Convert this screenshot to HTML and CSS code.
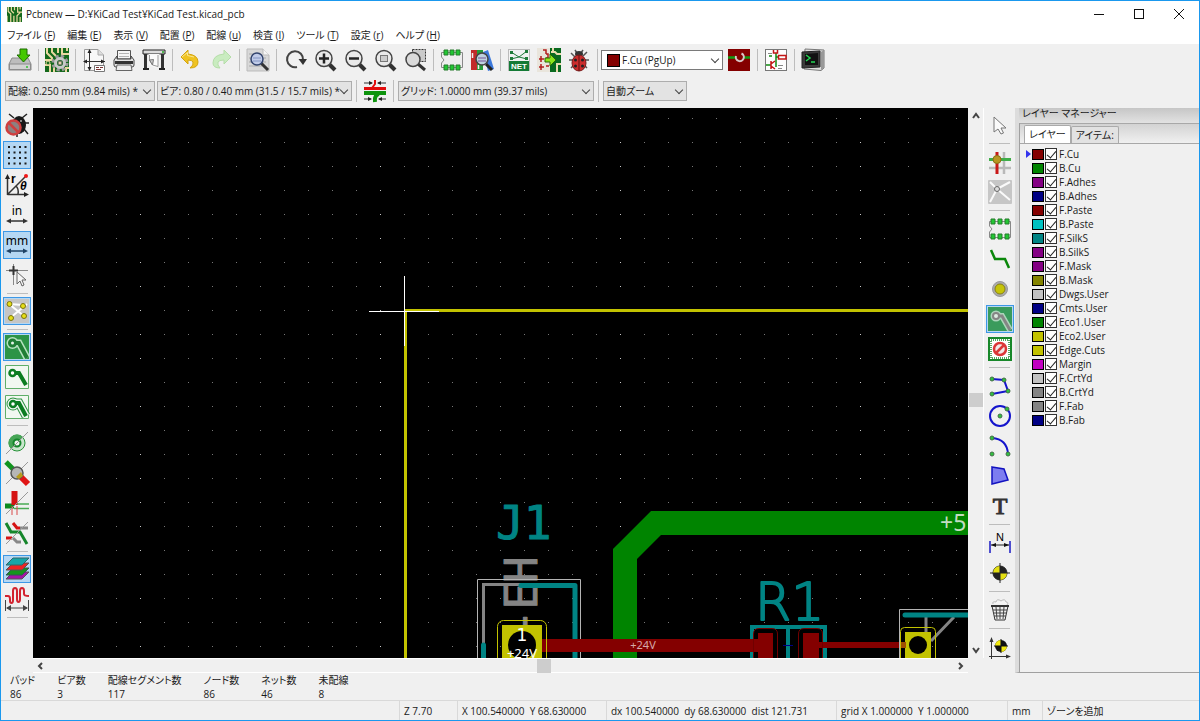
FILE: index.html
```html
<!DOCTYPE html>
<html lang="ja">
<head>
    <meta charset="UTF-8"/>
    <title>Pcbnew</title>
    <link rel="stylesheet" href="styles.css">
</head>
<body>

<header class="titlebar">
    <svg class="app-icon" viewBox="0 0 24 24">
        <rect width="24" height="24" fill="#14691c"/>
        <path d="M2 0V7L6 11V24M7 0V6L11 10M12 0V5M17 0V8H24M21 0V4M0 14V24M11 14V24M16 24V14L21 9M21 24V16" fill="none" stroke="#ead9a0" stroke-width="2"/>
    </svg>
    <h1 class="title">Pcbnew — D:¥KiCad Test¥KiCad Test.kicad_pcb</h1>
    <div class="window-controls">
        <button aria-label="最小化"><svg viewBox="0 0 12 12"><path d="M1 6.5H11"/></svg></button>
        <button aria-label="最大化"><svg viewBox="0 0 12 12"><rect x="1.5" y="1.5" width="9" height="9"/></svg></button>
        <button aria-label="閉じる"><svg viewBox="0 0 12 12"><path d="M1 1L11 11M11 1L1 11"/></svg></button>
    </div>
</header>

<nav class="menubar">
    <a href="#">ファイル (<u>F</u>)</a>
    <a href="#">編集 (<u>E</u>)</a>
    <a href="#">表示 (<u>V</u>)</a>
    <a href="#">配置 (<u>P</u>)</a>
    <a href="#">配線 (<u>u</u>)</a>
    <a href="#">検査 (<u>I</u>)</a>
    <a href="#">ツール (<u>T</u>)</a>
    <a href="#">設定 (<u>r</u>)</a>
    <a href="#">ヘルプ (<u>H</u>)</a>
</nav>

<div class="toolbar">
    <button class="tool" aria-label="保存">
        <svg viewBox="0 0 24 24"><path d="M4 10H20L23 16V22H1V16Z" fill="#bdbdbd" stroke="#8b8b8b"/><path d="M1.500 16H22.500V21.500H1.500Z" fill="#d2d2d2" stroke="#8b8b8b"/><circle cx="19" cy="19" r="1" fill="#30c030"/><path d="M12 1H19V7H22L15.500 14L9 7H12Z" fill="#45c800" stroke="#1d6b00"/></svg>
    </button>
    <span class="sep"></span>
    <button class="tool" aria-label="基板の設定">
        <svg viewBox="0 0 24 24"><rect width="24" height="24" fill="#14691c"/><path d="M2 0V5L7 10V12H0M7 0V4L11 8M13 0V5M17 0V6H24M22 0V3M0 17H5V24M9 24V19M21 24V20H24" fill="none" stroke="#ead9a0" stroke-width="2"/><circle cx="3" cy="15" r="2" fill="#14691c" stroke="#ead9a0"/><circle cx="15" cy="15" r="6.500" fill="none" stroke="#999" stroke-width="4" stroke-dasharray="3 2.100"/><circle cx="15" cy="15" r="4.500" fill="#14691c" stroke="#c8c8c8" stroke-width="3"/><circle cx="15" cy="15" r="2" fill="#e4d7a8" stroke="#666"/></svg>
    </button>
    <span class="sep"></span>
    <button class="tool" aria-label="ページ設定">
        <svg viewBox="0 0 24 24"><path d="M2.500 1.500H16L21.500 7V22.500H2.500Z" fill="#f8f8f8" stroke="#999"/><path d="M16 1.500V7H21.500" fill="#ddd" stroke="#aaa"/><path d="M7.500 3V22M3 13.500H23" stroke="#333" fill="none"/><path d="M7.500 1L5.500 5H9.500ZM7.500 23L5.500 19H9.500ZM1 13.500L5 11.500V15.500ZM23 13.500L19 11.500V15.500Z" fill="#222"/><path d="M12.500 17.500H22.500V23.500H12.500Z" fill="#fff" stroke="#777"/><path d="M14 19.500H17M18 19.500H21M14 21.500H19" stroke="#7a3333"/></svg>
    </button>
    <button class="tool" aria-label="印刷">
        <svg viewBox="0 0 24 24"><path d="M5.500 2.500H18.500V11H5.500Z" fill="#f6f6f6" stroke="#555"/><path d="M7 5.500H17M7 8.500H17" stroke="#b5b5b5"/><path d="M5 8L2 12V17Q2 19 4 19H20Q22 19 22 17V12L19 8V11H5Z" fill="#e4e4e4" stroke="#444"/><path d="M3 13H21V16H3Z" fill="#333"/><path d="M5 17H19L20 22.500H4Z" fill="#ededed" stroke="#666"/></svg>
    </button>
    <button class="tool" aria-label="プロット">
        <svg viewBox="0 0 24 24"><path d="M1 2H23V6H1Z" fill="#ddd" stroke="#222"/><path d="M3.500 6V20M20.500 6V20" stroke="#333" stroke-width="3"/><path d="M1 21H7M17 21H23" stroke="#222" stroke-width="2"/><path d="M6.500 6H17.500V17L14 20L6.500 17Z" fill="#f8f8f8"/><path d="M7.500 7V12L10.500 17L16 18.500V7" fill="#fbfbfb" stroke="#999"/><path d="M10.500 17L11.500 11.500L7.500 12Z" fill="#ccc" stroke="#777"/><circle cx="21" cy="4" r="1" fill="#2a2"/></svg>
    </button>
    <span class="sep"></span>
    <button class="tool" aria-label="元に戻す">
        <svg viewBox="0 0 24 24"><path d="M2 9L9 2V6Q19 7 19 14Q19 20 11 20Q15 17 14 14Q13 12 9 12V16Z" fill="#efc321" stroke="#d4a40e"/><path d="M3 9L8.500 4.500V7.500L15 9" fill="none" stroke="#fbe792"/></svg>
    </button>
    <button class="tool" aria-label="やり直し">
        <svg viewBox="0 0 24 24"><path d="M22 9L15 2V6Q4 7 4 15Q4 20 11 20Q8 17 9 14Q10 12 15 12V16Z" fill="#c9ecc0" stroke="#b5dda9"/></svg>
    </button>
    <span class="sep"></span>
    <button class="tool" aria-label="検索">
        <svg viewBox="0 0 24 24"><path d="M1 1H17L23 7V23H1Z" fill="#d8d8d8" stroke="#bbb"/><path d="M17 1V7H23" fill="#f5f5f5" stroke="#bbb"/><path d="M3 6H15M3 10H20M3 14H20M3 18H16" stroke="#aaa"/><path d="M15 15L22 22" stroke="#333" stroke-width="3"/><circle cx="11" cy="11" r="6" fill="#c1cce9" stroke="#33456f" stroke-width="1.500"/><path d="M7 10H15M7 13H15" stroke="#8496c3"/></svg>
    </button>
    <span class="sep"></span>
    <button class="tool" aria-label="再描画">
        <svg viewBox="0 0 24 24"><path d="M14 19A8 8 0 1 1 20 12" fill="none" stroke="#444" stroke-width="2"/><path d="M15.500 11H24L20 17Z" fill="#333"/></svg>
    </button>
    <button class="tool" aria-label="拡大">
        <svg viewBox="0 0 24 24"><path d="M16 16L22 22" stroke="#333" stroke-width="4"/><circle cx="11" cy="10.500" r="8" fill="#e9e9e9" stroke="#444" stroke-width="1.500"/><path d="M6 10.500H16M11 5.500V15.500" stroke="#222" stroke-width="2.500"/></svg>
    </button>
    <button class="tool" aria-label="縮小">
        <svg viewBox="0 0 24 24"><path d="M16 16L22 22" stroke="#333" stroke-width="4"/><circle cx="11" cy="10.500" r="8" fill="#e9e9e9" stroke="#444" stroke-width="1.500"/><path d="M6 10.500H16" stroke="#222" stroke-width="2.500"/></svg>
    </button>
    <button class="tool" aria-label="画面に合わせる">
        <svg viewBox="0 0 24 24"><path d="M16 16L22 22" stroke="#333" stroke-width="4"/><circle cx="11" cy="10.500" r="8" fill="#e9e9e9" stroke="#444" stroke-width="1.500"/><rect x="7.500" y="7.500" width="7" height="6" fill="#ccc" stroke="#777"/></svg>
    </button>
    <button class="tool" aria-label="選択範囲を拡大">
        <svg viewBox="0 0 24 24"><rect x="9.500" y="1.500" width="13" height="12" fill="#cacaca" stroke="#333" stroke-dasharray="2 1"/><path d="M15 16L22 22" stroke="#333" stroke-width="3"/><circle cx="10" cy="11.500" r="7" fill="#dadada" stroke="#444" stroke-width="1.500"/></svg>
    </button>
    <span class="sep"></span>
    <button class="tool" aria-label="フットプリント エディター">
        <svg viewBox="0 0 24 24"><path d="M1.500 4.500H22.500V19.500H1.500V15L4 12L1.500 9Z" fill="#eee" stroke="#888"/><path d="M4 2H8V7H4ZM10 2H14V7H10ZM16 2H20V7H16ZM4 17H8V22H4ZM10 17H14V22H10ZM16 17H20V22H16Z" fill="#21c832" stroke="#267a2c"/></svg>
    </button>
    <button class="tool" aria-label="フットプリント ビューアー">
        <svg viewBox="0 0 24 24"><path d="M1 2H7V22H1Z" fill="#c22b2b"/><path d="M7 2H13V22H7Z" fill="#259b39"/><path d="M13 4L18 2L24 21L18 23Z" fill="#3b78db"/><path d="M2.500 5V10M8.500 17V21" stroke="#eee" stroke-width="1.500"/><path d="M16 16L22 22" stroke="#222" stroke-width="3"/><circle cx="12" cy="11" r="6" fill="#bdd2df" stroke="#444" stroke-width="1.500"/><path d="M8 10H16M8 13H16" stroke="#759"/></svg>
    </button>
    <span class="sep"></span>
    <button class="tool" aria-label="ネットリスト">
        <svg viewBox="0 0 24 24"><rect x="1.500" y="1.500" width="21" height="21" fill="#f2f2f2" stroke="#bbb"/><path d="M4 4L12 9L20 3M12 9L4 11M12 9L20 11" fill="none" stroke="#207b3a"/><path d="M3 3H6V6H3ZM18 2H21V5H18ZM3 9H6V12H3ZM18 9H21V12H18Z" fill="#207b3a"/><rect x="2" y="13" width="20" height="10" fill="#147a35"/><text class="net-label" x="12" y="21">NET</text></svg>
    </button>
    <button class="tool" aria-label="ネットリストの読み込み">
        <svg viewBox="0 0 24 24"><rect width="24" height="24" fill="#e9e5dc"/><path d="M13 0H24V24H13V16L17 13L13 10Z" fill="#0a6a20"/><path d="M14 4H18L20 6H24M16 0V3M20 24V16H24" fill="none" stroke="#ecdcae" stroke-width="2"/><path d="M2 11H7M4 8V14M2 19H7M4 16V22M9 6H11V10H9M9 18H12M6 2H9V6" fill="none" stroke="#b31e1e" stroke-width="1.500"/><path d="M8 10H13V6L19 12L13 18V14H8Z" fill="#8de51c" stroke="#266c00"/></svg>
    </button>
    <button class="tool" aria-label="デザインルールチェック">
        <svg viewBox="0 0 24 24"><path d="M4 5L8 9M20 4L16 8M2 12H6M22 12H18M4 20L7 17M20 20L17 17M8 2L10 5M16 2L14 5" stroke="#555" stroke-width="1.500"/><ellipse cx="12" cy="6" rx="4" ry="3" fill="#333"/><ellipse cx="12" cy="15" rx="7" ry="8" fill="#cc2d2d" stroke="#791d1d"/><path d="M12 7V23" stroke="#5c1111"/><circle cx="8.500" cy="12" r="1.500" fill="#222"/><circle cx="15.500" cy="12" r="1.500" fill="#222"/><circle cx="8.500" cy="18" r="1.500" fill="#222"/><circle cx="15.500" cy="18" r="1.500" fill="#222"/></svg>
    </button>
    <span class="sep"></span>
    <span class="select layer-select">
        <span class="swatch"></span>
        <select aria-label="レイヤー"><option>F.Cu (PgUp)</option></select>
    </span>
    <button class="tool" aria-label="レイヤーペア">
        <svg viewBox="0 0 24 24"><rect x="1" y="1" width="22" height="22" fill="#840000"/><path d="M1 9.500H8M16 9.500H23" stroke="#129a12" stroke-width="2.500"/><path d="M14.500 5.500A4 4 0 1 1 9 8" fill="none" stroke="#d8c7c7" stroke-width="2"/></svg>
    </button>
    <span class="sep"></span>
    <button class="tool" aria-label="回路図エディター">
        <svg viewBox="0 0 24 24"><rect x="1.500" y="1.500" width="21" height="21" fill="#fdfdfd" stroke="#777"/><path d="M12 5V19M5 8H8M12 9H15M2 17H7" stroke="#118a11" stroke-width="1.500"/><path d="M9.500 2V5H13.500V2M14.500 7.500H22V11H14.500ZM7 13V21M7 16L11 13M7 18L11 21" fill="none" stroke="#c31616" stroke-width="1.500"/><path d="M4 5.500H8M14 17.500H19M14 20.500H18" stroke="#888"/></svg>
    </button>
    <span class="sep"></span>
    <button class="tool" aria-label="スクリプト コンソール">
        <svg viewBox="0 0 24 24"><path d="M4 1L23 2V20L20 22.500L3 21Z" fill="#ddd" stroke="#777"/><path d="M20 4V22L23 20V2Z" fill="#999"/><path d="M1 4L19 3V19L1 20Z" fill="#3b3b3b" stroke="#222"/><path d="M4 6L17 5V17L4 17Z" fill="#111"/><path d="M5 7L9 10L5 13M10 14H14" fill="none" stroke="#24d655" stroke-width="1.500"/></svg>
    </button>
</div>

<div class="toolbar toolbar-options">
    <span class="select track-select"><select aria-label="配線幅"><option>配線: 0.250 mm (9.84 mils) *</option></select></span>
    <span class="select via-select"><select aria-label="ビアサイズ"><option>ビア: 0.80 / 0.40 mm (31.5 / 15.7 mils) *</option></select></span>
    <span class="sep"></span>
    <button class="tool" aria-label="自動配線幅">
        <svg viewBox="0 0 24 24"><path d="M1 9.500H23" stroke="#e10d0d" stroke-width="3"/><path d="M1 14H23" stroke="#0d930d" stroke-width="4"/><path d="M12 1V5L9 9" fill="none" stroke="#e10d0d" stroke-width="2"/><path d="M16 15Q11 16 12 23" fill="none" stroke="#0d930d" stroke-width="4"/><path d="M1 4H9M23 4H15M1 20H8M23 20H16" stroke="#333"/><path d="M10 4L6 2V6ZM14 4L18 2V6ZM9 20L5 18V22ZM15 20L19 18V22Z" fill="#222"/></svg>
    </button>
    <span class="sep"></span>
    <span class="select grid-select"><select aria-label="グリッド"><option>グリッド: 1.0000 mm (39.37 mils)</option></select></span>
    <span class="sep"></span>
    <span class="select zoom-select"><select aria-label="ズーム"><option>自動ズーム</option></select></span>
</div>

<main class="workspace">
    <div class="toolbox toolbox-left">
        <button class="tool" aria-label="DRCオフ">
            <svg viewBox="0 0 24 24"><path d="M9 5L4 1M17 5L22 1M20 10H24M19 16L23 21M12 20V24" stroke="#222" stroke-width="1.500"/><ellipse cx="14" cy="12" rx="7" ry="9" fill="#181818"/><circle cx="16" cy="8" r="1" fill="#aaa"/><circle cx="8.500" cy="14.500" r="7" fill="#8d8080" stroke="#cf3f3f" stroke-width="2.500"/><path d="M4 10L13 19" stroke="#cf3f3f" stroke-width="2.500"/></svg>
        </button>
        <button class="tool active" aria-label="グリッド表示">
            <svg viewBox="0 0 24 24"><path d="M3 4H22M3 9.500H22M3 15H22M3 20.500H22" stroke="#1c1c1c" stroke-width="2" stroke-dasharray="2 3.500"/></svg>
        </button>
        <button class="tool" aria-label="極座標">
            <svg viewBox="0 0 24 24"><path d="M2.500 22V4M2.500 21.500H20M2.500 21.500L20 4M11 13Q14 16 13 21" fill="none" stroke="#333" stroke-width="1.500"/><path d="M2.500 1L0 6H5ZM24 21.500L19 19V24Z" fill="#222"/><circle cx="21" cy="3" r="2" fill="#f01818"/><text class="polar-r" x="6" y="10">r</text><text class="polar-t" x="15" y="17">θ</text></svg>
        </button>
        <button class="tool" aria-label="インチ">
            <svg viewBox="0 0 24 24"><text class="unit-label" x="12" y="12">in</text><path d="M3 18H21" stroke="#333" stroke-width="1.500"/><path d="M1 18L6 15.500V20.500ZM23 18L18 15.500V20.500Z" fill="#333"/></svg>
        </button>
        <button class="tool active" aria-label="ミリメートル">
            <svg viewBox="0 0 24 24"><text class="unit-label" x="12" y="12">mm</text><path d="M3 18H21" stroke="#1f4265" stroke-width="1.500"/><path d="M1 18L6 15.500V20.500ZM23 18L18 15.500V20.500Z" fill="#1f4265"/></svg>
        </button>
        <button class="tool" aria-label="カーソル形状">
            <svg viewBox="0 0 24 24"><path d="M1 7.500H23M8.500 1V22" stroke="#888"/><path d="M4 7.500H13M8.500 3V12" stroke="#333" stroke-width="2"/><path d="M12 9V21L15 18L17 23L19 22L17 17H21Z" fill="#f5f5f5" stroke="#666"/></svg>
        </button>
        <span class="sep"></span>
        <button class="tool active" aria-label="ラッツネスト表示">
            <svg viewBox="0 0 24 24"><rect width="24" height="24" fill="#c5c5c5"/><path d="M18 6L4 5L19 17M5 19L22 5" fill="none" stroke="#fff" stroke-width="2"/><g fill="#e6de17" stroke="#7a7410"><circle cx="4.500" cy="5" r="2.500"/><circle cx="18" cy="7" r="2.500"/><circle cx="6" cy="19" r="2.500"/><circle cx="19" cy="17" r="2.500"/></g></svg>
        </button>
        <span class="sep"></span>
        <button class="tool active" aria-label="ゾーンの塗りつぶし表示">
            <svg viewBox="0 0 24 24"><rect width="24" height="24" fill="#2c9447"/><path d="M8 8H14L22 23" fill="none" stroke="#b5e2bf" stroke-width="7"/><circle cx="7.500" cy="8" r="6" fill="#b5e2bf"/><path d="M8 8H14L22 23" fill="none" stroke="#1f7e35" stroke-width="4"/><circle cx="7.500" cy="8" r="3" fill="#e5f3e8" stroke="#1f7e35" stroke-width="3"/></svg>
        </button>
        <button class="tool" aria-label="ゾーンを表示しない">
            <svg viewBox="0 0 24 24"><path d="M.500.500H23.500V23.500H.500Z" fill="#f1f8f1" stroke="#5fae69"/><path d="M8 8H14L21 20" fill="none" stroke="#0c7d22" stroke-width="4"/><circle cx="7.500" cy="8" r="3" fill="#fff" stroke="#0c7d22" stroke-width="2.500"/></svg>
        </button>
        <button class="tool" aria-label="ゾーンの輪郭表示">
            <svg viewBox="0 0 24 24"><path d="M.500.500H23.500V23.500H.500Z" fill="#f1f8f1" stroke="#5fae69"/><path d="M8 8H14L21 21" fill="none" stroke="#2b9140" stroke-width="9"/><circle cx="8" cy="9" r="6.500" fill="#2b9140"/><path d="M8 8H14L21 21" fill="none" stroke="#f1f8f1" stroke-width="7"/><circle cx="8" cy="9" r="5.500" fill="#f1f8f1"/><path d="M8 8H14L21 21" fill="none" stroke="#0c7d22" stroke-width="4"/><circle cx="8" cy="9" r="3" fill="#fff" stroke="#0c7d22" stroke-width="2.500"/></svg>
        </button>
        <span class="sep"></span>
        <button class="tool" aria-label="パッドの輪郭表示">
            <svg viewBox="0 0 24 24"><circle cx="12" cy="12" r="8" fill="#c9e6cd" stroke="#269238"/><path d="M6 18A8 8 0 0 1 18 6Z" fill="#47a557"/><circle cx="12" cy="12" r="3.500" fill="#f2f8f2" stroke="#14842a" stroke-width="2"/><path d="M1 23L23 1" stroke="#999"/></svg>
        </button>
        <button class="tool" aria-label="ビアの輪郭表示">
            <svg viewBox="0 0 24 24"><path d="M1 1L12 12" stroke="#11941e" stroke-width="5"/><path d="M12 12L23 23" stroke="#e01616" stroke-width="6"/><path d="M1 23L23 1" stroke="#999"/><circle cx="12" cy="12" r="6" fill="#b6b6b6" stroke="#555" stroke-width="1.500"/><path d="M11 16L16 11L18 15L14 18Z" fill="#b79c1b"/></svg>
        </button>
        <button class="tool" aria-label="配線の輪郭表示">
            <svg viewBox="0 0 24 24"><path d="M0 15H9" stroke="#0d8b1d" stroke-width="5"/><path d="M9 13H24M9 17.500H24" stroke="#49ab54" stroke-width="1.500"/><path d="M9.500 0V14" stroke="#d51313" stroke-width="6"/><path d="M7 15V24M12 15V24" stroke="#d94b4b"/><path d="M1 23L23 1" stroke="#999"/></svg>
        </button>
        <button class="tool" aria-label="ハイコントラスト">
            <svg viewBox="0 0 24 24"><path d="M1 2L6 11H15L22 23" fill="none" stroke="#16862b" stroke-width="3"/><path d="M8 2L12 7H15" fill="none" stroke="#d51414" stroke-width="3"/><path d="M15 7H23M8 17L12 21H16" fill="none" stroke="#888" stroke-width="3"/><path d="M1 17H7" stroke="#d51414" stroke-width="3"/><path d="M1 23L23 1" stroke="#999"/></svg>
        </button>
        <span class="sep"></span>
        <button class="tool active" aria-label="レイヤー マネージャー">
            <svg viewBox="0 0 24 24"><path d="M8 15H24L17 22H1Z" fill="#a514a5" stroke="#555"/><path d="M8 11H24L17 18H1Z" fill="#16951d" stroke="#355"/><path d="M8 6H24L17 13H1Z" fill="#ed2424" stroke="#555"/><path d="M8 1H24L17 8H1Z" fill="#17a5a8" stroke="#366"/></svg>
        </button>
        <button class="tool" aria-label="マイクロ波ツール">
            <svg viewBox="0 0 24 24"><path d="M0 9H3Q5 9 5 12V14Q5 16 6.500 16T8 13V4Q8 1 10 1T12 4V12Q12 15 13.500 15T15 12V4Q15 1 17 1T19 4V7Q19 9 24 9" fill="none" stroke="#d2232f" stroke-width="2"/><path d="M.500 13V24M23.500 13V24M2 21H22" stroke="#444"/><path d="M1 21L6 18V24ZM23 21L18 18V24Z" fill="#444"/></svg>
        </button>
        <span class="sep"></span>
    </div>

    <div class="board-area">
        <svg class="board">
            <defs>
                <pattern id="grid" x="44" y="118" width="24" height="24" patternUnits="userSpaceOnUse">
                    <rect width="1" height="1" fill="#777"/>
                </pattern>
                <pattern id="grid-major" x="140" y="118" width="240" height="24" patternUnits="userSpaceOnUse">
                    <rect width="1" height="1" fill="#c8c8c8"/>
                </pattern>
            </defs>
            <g transform="translate(-33 -108)">
                <rect x="33" y="108" width="4000" height="3000" fill="url(#grid)"/>
                <rect x="33" y="108" width="4000" height="3000" fill="url(#grid-major)"/>

                <!-- +5V track -->
                <path d="M4000 523H656L625 554V3000" fill="none" stroke="#008400" stroke-width="24"/>
                <text class="net-5v" x="940" y="531">+5</text>

                <!-- J1 -->
                <text class="ref-j1" x="496" y="539">J1</text>
                <text class="value-j1" transform="translate(537 636) rotate(-90)">-EH</text>
                <path d="M477.500 3000V579.500H580.500V3000" fill="none" stroke="#b4b4b4"/>
                <path d="M483.500 645V584.500H521" fill="none" stroke="#848484" stroke-width="3"/>
                <path d="M521 585.500H575V3000M483.500 645V3000" fill="none" stroke="#008484" stroke-width="5" stroke-linecap="round" stroke-linejoin="round"/>

                <!-- R1 -->
                <text class="ref-r1" x="755" y="620">R1</text>
                <path d="M752 3000V627H825V3000M788 627V3000" fill="none" stroke="#008484" stroke-width="4"/>
                <path d="M783 645.500H793" stroke="#000084"/>

                <!-- +24V track -->
                <path d="M530 645.500H765" stroke="#840000" stroke-width="13"/>
                <path d="M810 645H910" stroke="#840000" stroke-width="6"/>
                <path d="M758 633H773V3000H758ZM803 633H819V3000H803Z" fill="#840000"/>
                <path d="M753.500 3000V634Q753.500 628.500 759 628.500H772Q777.500 628.500 777.500 634V3000M798.500 3000V634Q798.500 628.500 804 628.500H817Q822.500 628.500 822.500 634V3000" fill="none" stroke="#700000"/>
                <text class="net-24v" x="643" y="649">+24V</text>

                <!-- pad 1 -->
                <rect x="502" y="625" width="40" height="40" fill="#c2c200"/>
                <circle cx="522" cy="645" r="14"/>
                <rect x="497.500" y="620.500" width="49" height="49" rx="6" fill="none" stroke="#c2c200"/>
                <text class="pad-number" x="522" y="641">1</text>
                <text class="pad-net" x="522" y="658">+24V</text>

                <!-- diode -->
                <path d="M899.500 3000V609.500H4000" fill="none" stroke="#b4b4b4"/>
                <path d="M926 617V633M954 617L931 641" stroke="#848484" stroke-width="3"/>
                <path d="M905 615H4000" stroke="#008484" stroke-width="5" stroke-linecap="round"/>
                <rect x="905" y="632" width="26" height="26" fill="#c2c200"/>
                <path d="M900 645H906" stroke="#a05000" stroke-width="6"/>
                <circle cx="918" cy="645" r="9"/>
                <rect x="900.500" y="627.500" width="35" height="35" rx="4" fill="none" stroke="#c2c200"/>

                <!-- board edge and cursor -->
                <path d="M4000 310.500H405.500V3000" fill="none" stroke="#c2c200" stroke-width="3"/>
                <path d="M404.500 276V346M369 311.500H439" stroke="#fff"/>
            </g>
        </svg>
        <div class="scrollbar scrollbar-v">
            <svg viewBox="0 0 16 16"><path d="M5 10L8 6L11 10"/></svg>
            <span class="space-above"></span>
            <span class="thumb"></span>
            <span class="space-below"></span>
            <svg viewBox="0 0 16 16"><path d="M5 6L8 10L11 6"/></svg>
        </div>
        <div class="scrollbar scrollbar-h">
            <svg viewBox="0 0 16 16"><path d="M9 5L6 8L9 11"/></svg>
            <span class="space-before"></span>
            <span class="thumb"></span>
            <span class="space-after"></span>
            <svg viewBox="0 0 16 16"><path d="M7 5L10 8L7 11"/></svg>
        </div>
    </div>

    <div class="toolbox toolbox-right">
        <button class="tool" aria-label="選択">
            <svg viewBox="0 0 24 24"><path d="M6 4V19L10 16L13 21L15.500 20L13 15H18Z" fill="#fafafa" stroke="#777"/></svg>
        </button>
        <span class="sep"></span>
        <button class="tool" aria-label="ネットのハイライト">
            <svg viewBox="0 0 24 24"><path d="M16 2V24M1 18H23" stroke="#b9b9b9" stroke-width="2.500"/><path d="M1 9.500H23" stroke="#3fae49" stroke-width="3"/><path d="M9 2V24" stroke="#c91818" stroke-width="3"/><circle cx="9" cy="9.500" r="4" fill="#b89622" stroke="#8b6d16"/></svg>
        </button>
        <button class="tool" aria-label="ローカル ラッツネスト">
            <svg viewBox="0 0 24 24"><rect width="24" height="24" rx="1" fill="#c6c6c6"/><path d="M9 9L22 2M9 9L2 2M9 9L2 22M9 9L22 20" stroke="#fafafa" stroke-width="2"/><circle cx="9" cy="9" r="2.500" fill="#ddd" stroke="#666"/></svg>
        </button>
        <span class="sep"></span>
        <button class="tool" aria-label="フットプリントの追加">
            <svg viewBox="0 0 24 24"><path d="M1.500 4.500H22.500V20.500H1.500V15L4 12L1.500 9Z" fill="#eee" stroke="#888"/><path d="M3 2H7V7H3ZM10 2H14V7H10ZM17 2H21V7H17ZM3 17H7V22H3ZM10 17H14V22H10ZM17 17H21V22H17Z" fill="#21c832" stroke="#267a2c"/></svg>
        </button>
        <button class="tool" aria-label="配線">
            <svg viewBox="0 0 24 24"><path d="M3 3L7 12H17L21 21" fill="none" stroke="#0a870a" stroke-width="2.500"/></svg>
        </button>
        <button class="tool" aria-label="ビアの追加">
            <svg viewBox="0 0 24 24"><circle cx="12" cy="12" r="7.500" fill="#aaa" stroke="#999"/><circle cx="12" cy="12" r="5" fill="#c6c407" stroke="#888115"/></svg>
        </button>
        <button class="tool active" aria-label="ゾーンを追加">
            <svg viewBox="0 0 24 24"><rect width="24" height="24" fill="#3a9b5c"/><path d="M8 9H14L22 23" fill="none" stroke="#acd5bb" stroke-width="6"/><circle cx="8" cy="9" r="5.500" fill="#acd5bb"/><path d="M8 9H14L22 23" fill="none" stroke="#858585" stroke-width="3"/><circle cx="8" cy="9" r="3" fill="#dcebe1" stroke="#858585" stroke-width="2"/></svg>
        </button>
        <button class="tool" aria-label="キープアウト エリア">
            <svg viewBox="0 0 24 24"><rect x="1" y="1" width="22" height="22" fill="#fff" stroke="#18882a" stroke-width="2"/><rect x="3" y="3" width="18" height="18" fill="none" stroke="#55a962" stroke-width="2" stroke-dasharray="1 1"/><circle cx="12" cy="12" r="6" fill="#f3e8e8" stroke="#db3737" stroke-width="2.500"/><path d="M8 16L16 8" stroke="#db3737" stroke-width="2.500"/></svg>
        </button>
        <span class="sep"></span>
        <button class="tool" aria-label="線">
            <svg viewBox="0 0 24 24"><path d="M4 5L16 6L20 17L4 20" fill="none" stroke="#1414cc" stroke-width="2"/><g fill="#2fc23e" stroke="#456b49"><circle cx="4" cy="5" r="2"/><circle cx="16" cy="6" r="2"/><circle cx="20" cy="17" r="2"/><circle cx="4" cy="20" r="2"/></g></svg>
        </button>
        <button class="tool" aria-label="円">
            <svg viewBox="0 0 24 24"><circle cx="12" cy="12" r="10" fill="none" stroke="#1414cc" stroke-width="2"/><g fill="#2fc23e" stroke="#456b49"><circle cx="12" cy="12" r="2"/><circle cx="19" cy="5" r="2"/></g></svg>
        </button>
        <button class="tool" aria-label="円弧">
            <svg viewBox="0 0 24 24"><path d="M4 4Q19 5 20 20" fill="none" stroke="#1414cc" stroke-width="2"/><g fill="#2fc23e" stroke="#456b49"><circle cx="4" cy="4" r="2"/><circle cx="20" cy="20" r="2"/><circle cx="4" cy="20" r="2"/></g></svg>
        </button>
        <button class="tool" aria-label="ポリゴン">
            <svg viewBox="0 0 24 24"><path d="M4 3L16 5L20 16L4 20Z" fill="#7d7df0" stroke="#1212c0" stroke-width="1.500"/></svg>
        </button>
        <button class="tool" aria-label="テキスト">
            <svg viewBox="0 0 24 24"><text class="text-glyph" x="12" y="20">T</text></svg>
        </button>
        <span class="sep"></span>
        <button class="tool" aria-label="寸法線">
            <svg viewBox="0 0 24 24"><path d="M2 10V22M22 10V22" stroke="#1818c4" stroke-width="1.500"/><path d="M3 14H21" stroke="#222"/><path d="M3 14L8 12V16ZM21 14L16 12V16Z" fill="#111"/><text class="dim-label" x="12" y="10">N</text></svg>
        </button>
        <button class="tool" aria-label="層合わせマーク">
            <svg viewBox="0 0 24 24"><circle cx="12" cy="12" r="7" fill="#222" stroke="#222"/><path d="M12 12V5A7 7 0 0 0 5 12ZM12 12V19A7 7 0 0 0 19 12Z" fill="#e4df13"/><path d="M12 2V22M2 12H22" stroke="#222"/></svg>
        </button>
        <span class="sep"></span>
        <button class="tool" aria-label="削除">
            <svg viewBox="0 0 24 24"><path d="M5 6Q4 3 8 4Q9 0 13 3Q17 0 18 4Q21 4 19 7" fill="#f5f5f5" stroke="#bbb"/><path d="M4 8H20L17 22H7Z" fill="#eee" stroke="#333"/><path d="M3 8H21" stroke="#333" stroke-width="2"/><path d="M8 9L9 21M12 9V21M16 9L15 21M5 12H19M6 15H18M6 18H18" stroke="#444"/></svg>
        </button>
        <span class="sep"></span>
        <button class="tool" aria-label="原点">
            <svg viewBox="0 0 24 24"><path d="M3.500 24V4M1 21.500H20" stroke="#333"/><path d="M3.500 2L1.500 7H5.500ZM23 21.500L18 19.500V23.500Z" fill="#333"/><circle cx="13" cy="11" r="6" fill="#111"/><path d="M13 11V5A6 6 0 0 0 7 11ZM13 11V17A6 6 0 0 0 19 11Z" fill="#f1e80e"/><path d="M13 4V18M6 11H20" stroke="#111"/></svg>
        </button>
    </div>

    <aside class="layers-panel">
        <h2 class="caption">レイヤー マネージャー</h2>
        <div class="tabs">
            <button class="tab selected">レイヤー</button>
            <button class="tab">アイテム:</button>
        </div>
        <ul class="layer-list" id="layerList"></ul>
    </aside>
</main>

<footer>
    <dl class="board-info">
        <div><dt>パッド</dt><dd>86</dd></div>
        <div><dt>ビア数</dt><dd>3</dd></div>
        <div><dt>配線セグメント数</dt><dd>117</dd></div>
        <div><dt>ノード数</dt><dd>86</dd></div>
        <div><dt>ネット数</dt><dd>46</dd></div>
        <div><dt>未配線</dt><dd>8</dd></div>
    </dl>
    <div class="statusbar">
        <span></span>
        <span>Z 7.70</span>
        <span>X 100.540000&nbsp; Y 68.630000</span>
        <span>dx 100.540000&nbsp; dy 68.630000&nbsp; dist 121.731</span>
        <span>grid X 1.000000&nbsp; Y 1.000000</span>
        <span>mm</span>
        <span>ゾーンを追加</span>
    </div>
</footer>

<script>
    const layers = [
      ["F.Cu", "#840000"],
      ["B.Cu", "#008400"],
      ["F.Adhes", "#840084"],
      ["B.Adhes", "#000084"],
      ["F.Paste", "#840000"],
      ["B.Paste", "#00c2c2"],
      ["F.SilkS", "#008484"],
      ["B.SilkS", "#840084"],
      ["F.Mask", "#840084"],
      ["B.Mask", "#848400"],
      ["Dwgs.User", "#c2c2c2"],
      ["Cmts.User", "#000084"],
      ["Eco1.User", "#008400"],
      ["Eco2.User", "#c2c200"],
      ["Edge.Cuts", "#c2c200"],
      ["Margin", "#c200c2"],
      ["F.CrtYd", "#c2c2c2"],
      ["B.CrtYd", "#848484"],
      ["F.Fab", "#848484"],
      ["B.Fab", "#000084"]
    ];

    const list = document.getElementById("layerList");
    layers.forEach(([name, color], i) => {
      const row = document.createElement("li");
      row.innerHTML = `
        <span class="marker ${i === 0 ? "current" : ""}"></span>
        <span class="swatch" style="background: ${color}"></span>
        <input type="checkbox" id="layer${i}" checked>
        <label for="layer${i}">${name}</label>`;
      list.appendChild(row);
    });
</script>

</body>
</html>
```
FILE: styles.css
```css
* {
  box-sizing: border-box;
}

body {
  margin: 0;
  height: 100vh;
  display: flex;
  flex-direction: column;
  border: 1px solid #1a98ee;
  background: #f0f0f0;
  color: #1a1a1a;
  font-family: "Open Sans", "Noto Sans CJK JP", sans-serif;
  font-size: 10px;
  font-feature-settings: "palt";
  overflow: hidden;
}

button,
select {
  font: inherit;
  font-feature-settings: inherit;
  color: inherit;
}

h1,
h2,
ul,
dl,
dd {
  margin: 0;
  padding: 0;
}

/* title bar and menu */
.titlebar {
  display: flex;
  align-items: center;
  height: 26px;
  padding-left: 6px;
  background: #fff;
}

.app-icon {
  width: 15px;
  height: 15px;
}

.title {
  flex: 1;
  margin-left: 4px;
  font-size: 10px;
  font-weight: normal;
}

.window-controls {
  display: flex;
}

.window-controls button {
  display: flex;
  justify-content: center;
  width: 40px;
  padding: 0;
  border: none;
  background: none;
}

.window-controls svg {
  width: 12px;
  height: 12px;
  fill: none;
  stroke: #111;
}

.menubar {
  display: flex;
  gap: 12px;
  height: 17px;
  padding-left: 6px;
  background: #fff;
  line-height: 17px;
}

.menubar a {
  color: inherit;
  text-decoration: none;
}

/* toolbars */
.toolbar {
  display: flex;
  align-items: center;
  height: 32px;
  padding-left: 4px;
}

.toolbar-options {
  padding: 0 0 2px 3px;
}

.tool {
  flex: none;
  display: flex;
  align-items: center;
  justify-content: center;
  width: 28px;
  height: 28px;
  margin: 1px;
  padding: 0;
  border: none;
  background: none;
}

.tool.active {
  border: 1px solid #3d98e6;
  background: #b5d7f3;
}

.tool svg {
  flex: none;
  width: 24px;
  height: 24px;
  overflow: visible;
}

.sep {
  flex: none;
  background: #bdbdbd;
}

.toolbar .sep {
  width: 1px;
  height: 22px;
  margin: 0 3px;
}

.toolbox {
  flex: none;
  display: flex;
  flex-direction: column;
  align-items: center;
  padding-top: 2px;
}

.toolbox .sep {
  width: 21px;
  height: 1px;
}

.toolbox-left {
  width: 32px;
}

.toolbox-left .sep {
  margin: 3px 0 2px;
}

.toolbox-right {
  width: 31px;
}

.toolbox-right .sep {
  margin: 3px 0;
}

.net-label {
  fill: #fff;
  font: bold 8px "Liberation Sans", sans-serif;
  text-anchor: middle;
}

.unit-label {
  font: 12px "Noto Sans", sans-serif;
  text-anchor: middle;
}

.polar-r,
.polar-t {
  font: bold 12px "Liberation Sans", sans-serif;
}

.polar-t {
  font-style: italic;
}

.text-glyph {
  fill: #333;
  font: 24px "Liberation Serif", serif;
  stroke: #333;
  text-anchor: middle;
}

.dim-label {
  font: 11px "Liberation Sans", sans-serif;
  text-anchor: middle;
}

/* drop-downs */
.select {
  position: relative;
  display: flex;
  align-items: center;
  height: 20px;
  border: 1px solid #adadad;
  background: #e3e3e3;
}

.select::after {
  content: "";
  position: absolute;
  right: 4px;
  top: 5px;
  width: 5px;
  height: 5px;
  border-right: 1px solid #444;
  border-bottom: 1px solid #444;
  transform: rotate(45deg);
}

.select select {
  flex: 1;
  min-width: 0;
  height: 18px;
  padding: 0 0 0 2px;
  border: none;
  background: none;
  appearance: none;
}

.layer-select {
  width: 122px;
  margin-right: 1px;
  padding-left: 5px;
  border-color: #7a7a7a;
  background: #fff;
}

.layer-select .swatch {
  width: 13px;
  height: 13px;
  border: 1px solid #000;
  background: #840000;
}

.toolbar-options .select {
  margin: 0 1px;
}

.track-select {
  width: 150px;
}

.via-select {
  width: 195px;
}

.grid-select {
  width: 196px;
}

.zoom-select {
  width: 84px;
}

/* workspace */
.workspace {
  flex: 1;
  display: flex;
  min-height: 0;
}

.board-area {
  flex: 1;
  display: grid;
  grid-template-columns: 1fr 16px;
  grid-template-rows: 1fr 15px;
  min-width: 0;
}

.board {
  width: 100%;
  height: 100%;
  min-height: 0;
  background: #000;
}

.board text {
  font-family: "Noto Sans", sans-serif;
}

.board .ref-j1,
.board .value-j1 {
  font-family: "DejaVu Sans Mono", monospace;
  font-size: 46px;
  fill: #008484;
  stroke: #008484;
  stroke-linejoin: round;
}

.board .value-j1 {
  font-size: 44px;
  fill: #848484;
  stroke: #848484;
}

.board .ref-r1 {
  font-family: "DejaVu Sans", sans-serif;
  font-size: 52px;
  font-weight: 200;
  fill: #008484;
  stroke: #008484;
  stroke-width: 2;
  stroke-linejoin: round;
}

.net-5v {
  font-size: 23px;
  fill: #c3dcc3;
}

.net-24v {
  font-size: 11px;
  fill: #d5a9a9;
  text-anchor: middle;
}

.board .pad-number {
  font-family: "DejaVu Sans", sans-serif;
  font-size: 17px;
  fill: #fff;
  text-anchor: middle;
}

.pad-net {
  font-size: 13px;
  fill: #fff;
  text-anchor: middle;
}

.scrollbar {
  display: flex;
  align-items: center;
  background: #f0f0f0;
}

.scrollbar svg {
  width: 16px;
  height: 16px;
  fill: none;
  stroke: #444;
  stroke-width: 2;
}

.scrollbar .thumb {
  width: 14px;
  height: 14px;
  background: #cdcdcd;
}

.scrollbar-v {
  flex-direction: column;
  border-right: 1px solid #fff;
}

.scrollbar-h {
  border-top: 1px solid #fff;
  border-bottom: 1px solid #fff;
}

.space-above {
  flex: 268;
}

.space-below {
  flex: 235;
}

.space-before {
  flex: 487;
}

.space-after {
  flex: 401;
}

/* layers panel */
.layers-panel {
  flex: none;
  width: 184px;
  border-left: 4px solid #dcdcdc;
  border-bottom: 1px solid #a0a0a0;
  box-shadow: inset 1px 0 #a0a0a0;
}

.caption {
  height: 15px;
  padding-left: 3px;
  background: linear-gradient(#c6c6c6, #e2e2e2);
  font-size: 10px;
  font-weight: normal;
  line-height: 11px;
}

.tabs {
  display: flex;
  align-items: flex-end;
  height: 21px;
  margin-left: 1px;
  padding-left: 4px;
  border-top: 1px solid #a8a8a8;
  border-bottom: 1px solid #a8a8a8;
  background: linear-gradient(#d3d3d3, #f0f0f0);
}

.tab {
  height: 17px;
  padding: 0 4px;
  border: 1px solid #aaa;
  border-bottom: none;
  border-radius: 2px 2px 0 0;
  background: #e2e2e2;
  line-height: 15px;
}

.tab.selected {
  height: 18px;
  background: #fff;
}

.layer-list {
  padding-top: 3px;
  list-style: none;
}

.layer-list li {
  display: flex;
  align-items: center;
  height: 14px;
  padding-left: 7px;
}

.marker {
  width: 6px;
}

.marker.current {
  height: 0;
  border: 4px solid transparent;
  border-left: 5px solid #3434ee;
  border-right: none;
  margin-right: 1px;
  width: 0;
}

.layer-list .swatch {
  width: 12px;
  height: 11px;
  border: 1px solid #000;
}

.layer-list input {
  appearance: none;
  display: flex;
  justify-content: center;
  width: 12px;
  height: 12px;
  margin: 0 2px 0 1px;
  border: 1px solid #333;
  background: #fff;
}

.layer-list input:checked::after {
  content: "";
  width: 4px;
  height: 8px;
  border-right: 1px solid #222;
  border-bottom: 1px solid #222;
  transform: rotate(40deg);
}

/* bottom bars */
.board-info {
  display: flex;
  gap: 22px;
  height: 27px;
  padding-left: 9px;
  line-height: 14px;
}

.statusbar {
  display: grid;
  grid-template-columns: 398fr 58fr 149fr 230fr 171fr 35fr 157fr;
  height: 20px;
  border-top: 1px solid #d9d9d9;
  line-height: 20px;
}

.statusbar span {
  padding-left: 4px;
  border-left: 1px solid #d9d9d9;
  white-space: nowrap;
}

.statusbar span:first-child {
  border-left: none;
}
```
